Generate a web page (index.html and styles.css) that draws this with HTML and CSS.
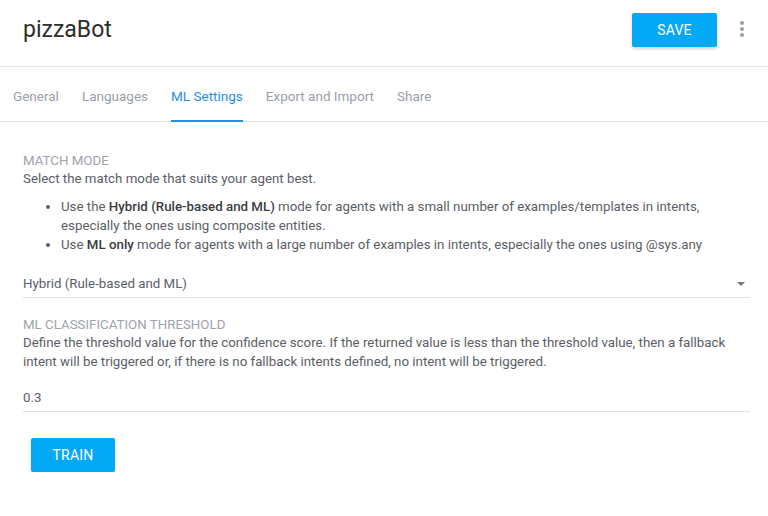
FILE: index.html
```html
<!DOCTYPE html>
<html>
<head>
<meta charset="utf-8">
<link rel="stylesheet" href="styles.css">
</head>
<body>
<header class="header">
  <h1 class="title">pizzaBot</h1>
  <div class="actions">
    <button class="btn btn-save">SAVE</button>
    <span class="kebab"><i></i><i></i><i></i></span>
  </div>
</header>
<nav class="tabs">
  <a class="tab">General</a>
  <a class="tab">Languages</a>
  <a class="tab active">ML Settings</a>
  <a class="tab">Export and Import</a>
  <a class="tab">Share</a>
</nav>
<main class="content">
  <div class="label">MATCH MODE</div>
  <div class="desc">Select the match mode that suits your agent best.</div>
  <ul class="list">
    <li>Use the <b>Hybrid (Rule-based and ML)</b> mode for agents with a small number of examples/templates in intents, especially the ones using composite entities.</li>
    <li>Use <b>ML only</b> mode for agents with a large number of examples in intents, especially the ones using @sys.any</li>
  </ul>
  <div class="field select">
    <span>Hybrid (Rule-based and ML)</span>
    <span class="arrow"></span>
  </div>
  <div class="label label2">ML CLASSIFICATION THRESHOLD</div>
  <div class="desc desc2">Define the threshold value for the confidence score. If the returned value is less than the threshold value, then a fallback intent will be triggered or, if there is no fallback intents defined, no intent will be triggered.</div>
  <div class="field input">0.3</div>
  <button class="btn btn-train">TRAIN</button>
</main>
</body>
</html>
```
FILE: styles.css
```css
* { box-sizing: border-box; }
body {
  margin: 0;
  background: #fff;
  font-family: Roboto, "Liberation Sans", sans-serif;
  color: #5b5e66;
}
.header {
  height: 67px;
  display: flex;
  justify-content: space-between;
  align-items: flex-start;
  padding: 13px 0 0 23px;
  border-bottom: 1px solid #e4e4e4;
}
.title {
  margin: 0;
  font-size: 23px;
  font-weight: 400;
  line-height: 34px;
  color: #2d2d2d;
}
.actions {
  display: flex;
  align-items: center;
  gap: 23px;
  padding-right: 24px;
}
.btn {
  border: none;
  border-radius: 2px;
  background: #03a9f4;
  color: #fff;
  font-family: Roboto, "Liberation Sans", sans-serif;
  font-size: 14px;
  font-weight: 400;
  height: 34px;
  width: 85px;
  box-shadow: 0 2px 3px rgba(0,0,0,0.18);
  letter-spacing: 0.2px;
}
.kebab {
  display: flex;
  flex-direction: column;
  gap: 2px;
  margin-top: -3px;
}
.kebab i {
  display: block;
  width: 4px;
  height: 4px;
  border-radius: 50%;
  background: #9e9e9e;
}
.tabs {
  height: 55px;
  display: flex;
  align-items: flex-end;
  gap: 23px;
  padding-left: 13px;
  border-bottom: 1px solid #e4e4e4;
}
.tab {
  font-size: 13.5px;
  line-height: 18px;
  color: #9aa0a8;
  padding-bottom: 15px;
  border-bottom: 2px solid transparent;
  margin-bottom: -1px;
}
.tab.active {
  color: #1e8fe6;
  border-bottom-color: #1e8fe6;
}
.content {
  padding: 30px 18px 0 23px;
  font-size: 13.3px;
}
.label {
  color: #9ea3ad;
  line-height: 18px;
}
.label2 { margin-top: 18px; line-height: 17px; }
.desc {
  line-height: 18px;
  color: #5b5e66;
}
.desc2 { line-height: 19px; }
.list {
  margin: 9px 0 0;
  padding-left: 38px;
  line-height: 19px;
  color: #5b5e66;
}
.list b { font-weight: 500; color: #3a3c42; }
.field {
  border-bottom: 1px solid #e0e0e0;
  color: #5b5e66;
  line-height: 18px;
}
.select {
  margin-top: 21px;
  padding-bottom: 4px;
  display: flex;
  justify-content: space-between;
  align-items: center;
}
.arrow {
  width: 0;
  height: 0;
  border-left: 4px solid transparent;
  border-right: 4px solid transparent;
  border-top: 4px solid #757575;
  margin-right: 5px;
}
.input {
  margin-top: 18px;
  padding-bottom: 4px;
}
.btn-train {
  display: block;
  margin: 26px 0 0 8px;
  width: 84px;
}
```
